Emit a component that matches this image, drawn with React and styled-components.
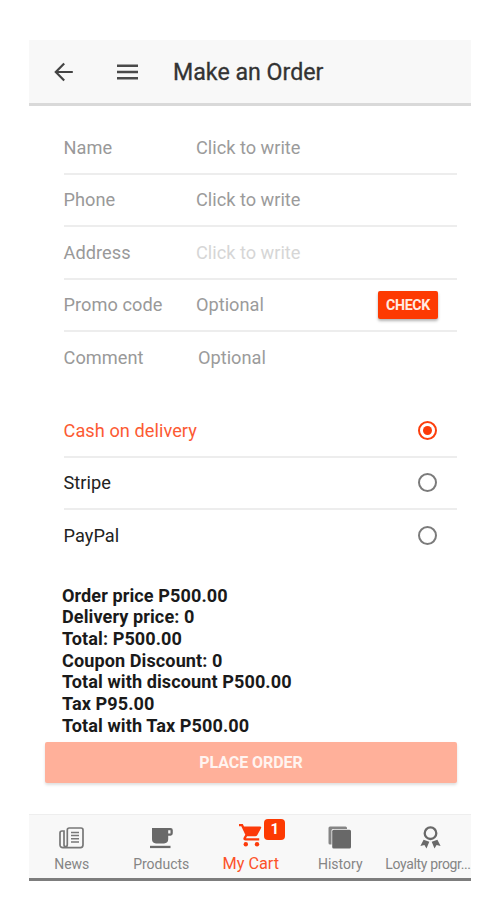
import React, { useState } from "react";
import styled, { createGlobalStyle } from "styled-components";

const fields = [
  { label: "Name", placeholder: "Click to write" },
  { label: "Phone", placeholder: "Click to write" },
  { label: "Address", placeholder: "Click to write", faded: true },
  { label: "Promo code", placeholder: "Optional", action: "CHECK" },
  { label: "Comment", placeholder: "Optional", indent: true },
];

const payments = ["Cash on delivery", "Stripe", "PayPal"];

const summary = [
  "Order price P500.00",
  "Delivery price: 0",
  "Total: P500.00",
  "Coupon Discount: 0",
  "Total with discount P500.00",
  "Tax P95.00",
  "Total with Tax P500.00",
];

const BackIcon = () => (
  <svg width="20" height="20" viewBox="0 0 20 20" fill="none" stroke="#444" strokeWidth="2.2">
    <path d="M18.8 10H2.5M10.2 1.5L1.8 10L10.2 18.5" />
  </svg>
);

const MenuIcon = () => (
  <svg width="21" height="16" viewBox="0 0 21 16" fill="#4a4a4a">
    <path d="M0 .6h21v2.4H0zM0 6.8h21v2.4H0zM0 13h21v2.4H0z" />
  </svg>
);

const NewsIcon = () => (
  <svg width="25" height="22" viewBox="0 0 25 22" fill="none" stroke="#777" strokeWidth="1.7">
    <path d="M8.3 17.5V3Q8.3 1 10.3 1H22Q24 1 24 3V17.8Q24 20.6 21.5 20.6H4Q1 20.6 1 17.8V6Q1 4 3 4H5V17.8Q5 19.6 6.6 19.6Q8.3 19.6 8.3 17.5" />
    <path d="M12 5.4h8M12 8.6h8M12 11.8h8M12 15h8" strokeWidth="1.5" />
  </svg>
);

const CupIcon = () => (
  <svg width="23" height="22" viewBox="0 0 23 22" fill="#696969">
    <path
      fillRule="evenodd"
      d="M2 1H20.5Q22.8 1 22.8 3.3V6.3Q22.8 8.7 20.5 8.7H18.2V12.3Q18.2 16.4 14 16.4H6Q2 16.4 2 12.3ZM18.2 3.2V6.5H20.5V3.2Z"
    />
    <path d="M0 18.8h20.5v2.3H0z" />
  </svg>
);

const CartIcon = () => (
  <svg width="23" height="23" viewBox="0 0 23 23" fill="#fc3a0a">
    <path
      fillRule="evenodd"
      d="M0 0H3.8L5 2.4H21Q22.8 2.4 22 4.2L18.2 11.2Q17.6 12.2 16.3 12.2H8L7 14.2H20.2V16.4H6.5Q3.3 16.4 4.8 13.3L6.3 10.7L2.3 2.2H0Z"
    />
    <circle cx="6.8" cy="20.3" r="2.2" />
    <circle cx="18" cy="20.3" r="2.2" />
  </svg>
);

const HistoryIcon = () => (
  <svg width="24" height="23" viewBox="0 0 24 23">
    <path d="M2 .5H17.5Q19 .5 19 2V3H5Q3.5 3 3.5 4.5V18.5H2Q.5 18.5 .5 17V2Q.5 .5 2 .5Z" fill="#858585" />
    <rect x="4.2" y="3.8" width="18.8" height="18.8" rx="1.5" fill="#686868" />
  </svg>
);

const RibbonIcon = () => (
  <svg width="21" height="23" viewBox="0 0 21 23">
    <circle cx="10.5" cy="7.2" r="5.8" fill="none" stroke="#696969" strokeWidth="2.3" />
    <path
      d="M3.6 13.7L9.3 15.7L6.5 22.6L4.4 19L.4 20ZM17.4 13.7L11.7 15.7L14.5 22.6L16.6 19L20.6 20Z"
      fill="#696969"
    />
  </svg>
);

const tabs = [
  { label: "News", icon: <NewsIcon /> },
  { label: "Products", icon: <CupIcon /> },
  { label: "My Cart", icon: <CartIcon />, badge: 1, active: true },
  { label: "History", icon: <HistoryIcon /> },
  { label: "Loyalty progr...", icon: <RibbonIcon />, tight: true },
];

const App = () => {
  const [payment, setPayment] = useState("Cash on delivery");

  return (
    <Screen>
      <GlobalStyle />
      <Header>
        <IconButton $gap={43} aria-label="Back"><BackIcon /></IconButton>
        <IconButton $gap={35} aria-label="Menu"><MenuIcon /></IconButton>
        <Title>Make an Order</Title>
      </Header>
      <Content>
        <List>
          {fields.map((field) => (
            <FieldRow key={field.label}>
              <Label>{field.label}</Label>
              <Placeholder $faded={field.faded} $indent={field.indent}>{field.placeholder}</Placeholder>
              {field.action && <CheckButton>{field.action}</CheckButton>}
            </FieldRow>
          ))}
        </List>
        <PaymentList>
          {payments.map((name) => (
            <PaymentRow key={name} $checked={payment === name} onClick={() => setPayment(name)}>
              <span>{name}</span>
              <Radio $checked={payment === name} />
            </PaymentRow>
          ))}
        </PaymentList>
        <Summary>
          {summary.map((line) => (
            <SummaryLine key={line}>{line}</SummaryLine>
          ))}
        </Summary>
        <OrderButton>PLACE ORDER</OrderButton>
      </Content>
      <TabBar>
        {tabs.map((tab) => (
          <Tab key={tab.label} $active={tab.active}>
            <TabIcon>
              {tab.icon}
              {tab.badge && <Badge>{tab.badge}</Badge>}
            </TabIcon>
            <TabLabel $active={tab.active} $tight={tab.tight}>{tab.label}</TabLabel>
          </Tab>
        ))}
      </TabBar>
    </Screen>
  );
};

const GlobalStyle = createGlobalStyle`
  * {
    box-sizing: border-box;
  }
  body {
    margin: 0;
    background: #fff;
    font-family: Roboto, "Liberation Sans", sans-serif;
  }
  button {
    font-family: inherit;
    border: 0;
    padding: 0;
  }
`;

const Screen = styled.div`
  display: flex;
  flex-direction: column;
  width: 442px;
  height: 841px;
  margin: 40px 0 0 29px;
`;

const Header = styled.header`
  display: flex;
  align-items: center;
  flex: none;
  height: 66px;
  padding: 1px 0 0 25px;
  background: #f8f8f8;
  border-bottom: 3px solid #d9d9d9;
`;

const IconButton = styled.button`
  display: flex;
  margin-right: ${(props) => props.$gap}px;
  background: none;
`;

const Title = styled.h1`
  margin: 0;
  font-size: 23.2px;
  font-weight: 400;
  line-height: 30px;
  color: #333;
  -webkit-text-stroke: 0.3px #333;
`;

const Content = styled.main`
  display: flex;
  flex-direction: column;
  flex: 1;
  padding: 16px 14px 0 16px;
`;

const List = styled.div`
  display: flex;
  flex-direction: column;
  margin-left: 18.5px;
`;

const Row = styled.div`
  display: flex;
  align-items: center;
  height: 52.5px;
  font-size: 18.2px;
  border-bottom: 2px solid #ededed;

  &:last-child {
    border-bottom-color: transparent;
  }
`;

const FieldRow = styled(Row)`
  padding-right: 19px;
  color: #999;
`;

const Label = styled.label`
  width: 132.5px;
  letter-spacing: 0.05px;
`;

const Placeholder = styled.span`
  flex: 1;
  padding-left: ${(props) => (props.$indent ? 2 : 0)}px;
  color: ${(props) => (props.$faded ? "#d6d6d6" : "#9b9b9b")};
`;

const CheckButton = styled.button`
  width: 60px;
  height: 28px;
  border-radius: 2px;
  background: #fd3a02;
  color: #ffeae4;
  font-size: 14.2px;
  font-weight: 700;
  letter-spacing: -0.3px;
  box-shadow: 0 2px 3px rgba(0, 0, 0, 0.3);
`;

const PaymentList = styled(List)`
  margin-top: 20.5px;
`;

const PaymentRow = styled(Row)`
  justify-content: space-between;
  padding-right: 20px;
  letter-spacing: 0.05px;
  color: ${(props) => (props.$checked ? "#fc5a33" : "#222")};
`;

const Radio = styled.span`
  display: flex;
  align-items: center;
  justify-content: center;
  width: 19px;
  height: 19px;
  border: 2px solid ${(props) => (props.$checked ? "#fc3e0c" : "#7b7b7b")};
  border-radius: 50%;

  &::after {
    content: "";
    width: 9px;
    height: 9px;
    border-radius: 50%;
    background: ${(props) => (props.$checked ? "#fc3a08" : "transparent")};
  }
`;

const Summary = styled.div`
  margin: 22.3px 0 0 17px;
`;

const SummaryLine = styled.div`
  height: 21.65px;
  line-height: 21.65px;
  font-size: 18.1px;
  font-weight: 700;
  letter-spacing: 0.08px;
  color: #1a1a1a;
  white-space: nowrap;
`;

const OrderButton = styled.button`
  height: 41px;
  margin-top: 6px;
  border-radius: 2px;
  background: #ffb09a;
  color: #fff4f0;
  font-size: 16px;
  font-weight: 700;
  letter-spacing: -0.05px;
  box-shadow: 0 2px 3px rgba(0, 0, 0, 0.13);
`;

const TabBar = styled.nav`
  display: flex;
  flex: none;
  height: 67px;
  background: #f8f8f8;
  border-top: 1px solid #eee;
  border-bottom: 3px solid #7d7d7d;
`;

const Tab = styled.div`
  display: flex;
  flex-direction: column;
  align-items: center;
  flex: none;
  width: 89.5px;
  padding-top: ${(props) => (props.$active ? 9 : 11)}px;

  &:first-child {
    margin-left: -2px;
  }

  &:last-child {
    width: 86px;
  }

  &:last-child svg {
    margin-left: 5px;
  }
`;

const TabIcon = styled.div`
  position: relative;
  display: flex;
  align-items: center;
  height: 23px;
`;

const Badge = styled.span`
  position: absolute;
  top: -5px;
  left: 25px;
  width: 21px;
  height: 21px;
  border-radius: 4px;
  background: #fd3a02;
  color: #fff;
  font-size: 15px;
  font-weight: 700;
  line-height: 20px;
  text-align: center;
`;

const TabLabel = styled.span`
  margin-top: ${(props) => (props.$active ? 8 : 6)}px;
  font-size: ${(props) => (props.$active ? 16.3 : 14)}px;
  line-height: 18px;
  letter-spacing: ${(props) => (props.$tight ? -0.35 : 0)}px;
  color: ${(props) => (props.$active ? "#fc5229" : "#858585")};
  white-space: nowrap;
`;

export default App;
